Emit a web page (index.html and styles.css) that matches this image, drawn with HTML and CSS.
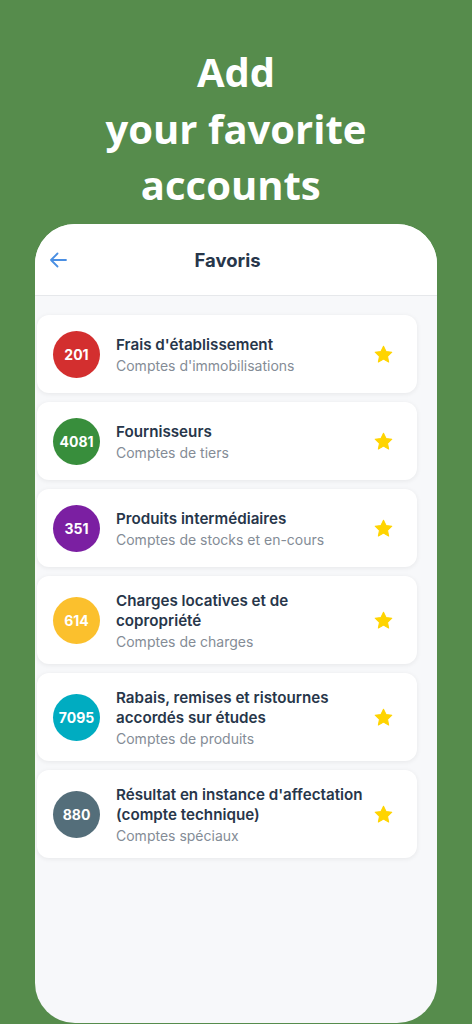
FILE: index.html
```html
<!DOCTYPE html>
<html lang="fr">
<head>
<meta charset="utf-8">
<link rel="stylesheet" href="styles.css">
</head>
<body>
<div class="page">
  <h1 class="headline">Add<br>your favorite<br>accounts&nbsp;</h1>
  <div class="phone">
    <div class="topbar">
      <svg class="back" width="18" height="16" viewBox="0 0 18 16"><path d="M17 8H2M8.5 1.5L2 8l6.5 6.5" fill="none" stroke="#4a8fe3" stroke-width="1.8" stroke-linecap="round" stroke-linejoin="round"/></svg>
      <div class="title">Favoris</div>
    </div>
    <div class="list">
      <div class="card"><div class="badge red">201</div><div class="info"><div class="name">Frais d'établissement</div><div class="cat">Comptes d'immobilisations</div></div><svg class="star" viewBox="0 0 24 24"><path d="M12 2.5l2.9 6.1 6.6.8-4.9 4.6 1.3 6.6L12 17.3l-5.9 3.3 1.3-6.6-4.9-4.6 6.6-.8z" fill="#ffd400" stroke="#ffd400" stroke-width="1.2" stroke-linejoin="round"/></svg></div>
      <div class="card"><div class="badge green">4081</div><div class="info"><div class="name">Fournisseurs</div><div class="cat">Comptes de tiers</div></div><svg class="star" viewBox="0 0 24 24"><path d="M12 2.5l2.9 6.1 6.6.8-4.9 4.6 1.3 6.6L12 17.3l-5.9 3.3 1.3-6.6-4.9-4.6 6.6-.8z" fill="#ffd400" stroke="#ffd400" stroke-width="1.2" stroke-linejoin="round"/></svg></div>
      <div class="card"><div class="badge purple">351</div><div class="info"><div class="name">Produits intermédiaires</div><div class="cat">Comptes de stocks et en-cours</div></div><svg class="star" viewBox="0 0 24 24"><path d="M12 2.5l2.9 6.1 6.6.8-4.9 4.6 1.3 6.6L12 17.3l-5.9 3.3 1.3-6.6-4.9-4.6 6.6-.8z" fill="#ffd400" stroke="#ffd400" stroke-width="1.2" stroke-linejoin="round"/></svg></div>
      <div class="card"><div class="badge yellow">614</div><div class="info"><div class="name">Charges locatives et de copropriété</div><div class="cat">Comptes de charges</div></div><svg class="star" viewBox="0 0 24 24"><path d="M12 2.5l2.9 6.1 6.6.8-4.9 4.6 1.3 6.6L12 17.3l-5.9 3.3 1.3-6.6-4.9-4.6 6.6-.8z" fill="#ffd400" stroke="#ffd400" stroke-width="1.2" stroke-linejoin="round"/></svg></div>
      <div class="card"><div class="badge cyan">7095</div><div class="info"><div class="name">Rabais, remises et ristournes accordés sur études</div><div class="cat">Comptes de produits</div></div><svg class="star" viewBox="0 0 24 24"><path d="M12 2.5l2.9 6.1 6.6.8-4.9 4.6 1.3 6.6L12 17.3l-5.9 3.3 1.3-6.6-4.9-4.6 6.6-.8z" fill="#ffd400" stroke="#ffd400" stroke-width="1.2" stroke-linejoin="round"/></svg></div>
      <div class="card"><div class="badge slate">880</div><div class="info"><div class="name">Résultat en instance d'affectation (compte technique)</div><div class="cat">Comptes spéciaux</div></div><svg class="star" viewBox="0 0 24 24"><path d="M12 2.5l2.9 6.1 6.6.8-4.9 4.6 1.3 6.6L12 17.3l-5.9 3.3 1.3-6.6-4.9-4.6 6.6-.8z" fill="#ffd400" stroke="#ffd400" stroke-width="1.2" stroke-linejoin="round"/></svg></div>
    </div>
  </div>
</div>
</body>
</html>
```
FILE: styles.css
```css
* { box-sizing: border-box; }
html, body { margin: 0; padding: 0; }
body {
  background: #568c4c;
  width: 472px;
  height: 1024px;
  overflow: hidden;
  font-family: Inter, "Noto Sans", sans-serif;
}
.page {
  display: flex;
  flex-direction: column;
  align-items: center;
  padding-top: 44px;
}
.headline {
  margin: 0;
  font-family: "Open Sans", sans-serif;
  font-weight: 700;
  font-size: 40px;
  line-height: 56.5px;
  color: #fff;
  text-align: center;
}
.phone {
  margin-top: 10px;
  width: 402px;
  height: 799px;
  align-self: flex-start;
  margin-left: 35px;
  background: #f7f8fa;
  border-radius: 40px;
  overflow: hidden;
  display: flex;
  flex-direction: column;
}
.topbar {
  height: 72px;
  background: #fff;
  border-bottom: 1.5px solid #e6e8eb;
  display: flex;
  align-items: center;
  justify-content: center;
  padding-right: 17px;
  position: relative;
}
.back {
  position: absolute;
  left: 14px;
  top: 28px;
}
.title {
  font-size: 18.5px;
  font-weight: 700;
  color: #27364a;
  margin-top: 2px;
}
.list {
  padding: 19px 0 0 2px;
  display: flex;
  flex-direction: column;
  gap: 9px;
}
.card {
  width: 380px;
  min-height: 78px;
  background: #fff;
  border-radius: 12px;
  box-shadow: 0 1px 5px rgba(0,0,0,0.07);
  display: flex;
  align-items: center;
  padding: 15px 23px 13px 16px;
}
.badge {
  width: 47px;
  height: 47px;
  border-radius: 50%;
  flex: none;
  display: flex;
  align-items: center;
  justify-content: center;
  color: #fff;
  font-weight: 700;
  font-size: 14px;
}
.red { background: #d32f2f; }
.green { background: #388e3c; }
.purple { background: #7b1fa2; }
.yellow { background: #fbc02d; }
.cyan { background: #00acc1; }
.slate { background: #546e7a; }
.info {
  flex: 1;
  margin-left: 16px;
  display: flex;
  flex-direction: column;
  gap: 1px;
}
.name {
  font-size: 15.2px;
  font-weight: 600;
  color: #27364a;
  line-height: 20px;
}
.cat {
  font-size: 14px;
  color: #848c96;
  line-height: 19px;
}
.star {
  width: 21px;
  height: 21px;
  flex: none;
  margin-left: 0;
}
```
